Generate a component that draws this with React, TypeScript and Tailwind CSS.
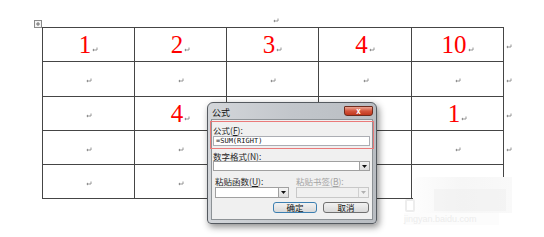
import React from 'react'

const rows: string[][] = [
    ['1', '2', '3', '4', '10'],
    ['', '', '', '', ''],
    ['', '4', '', '', '1'],
    ['', '', '', '', ''],
    ['', '', '', '', ''],
]

function Mark() {
    return (
        <svg className="inline-block w-[6px] h-[5px] ml-[1px] align-[1px]" viewBox="0 0 6 5" fill="none">
            <path d="M5 0.5V3H1" stroke="#8a8a8a" strokeWidth="0.9" />
            <path d="M0.4 3L2 1.6V4.4Z" fill="#8a8a8a" />
        </svg>
    )
}

function DropButton({ disabled }: { disabled?: boolean }) {
    return (
        <div
            className={`w-[10px] h-full flex items-center justify-center border-l ${
                disabled ? 'border-[#d0d0d0]' : 'border-[#a0a0a0] bg-linear-to-b from-[#f4f4f4] to-[#dedede]'
            }`}
        >
            <svg className="w-[5px] h-[3px]" viewBox="0 0 5 3">
                <path d="M0 0H5L2.5 3Z" fill={disabled ? '#b0b0b0' : '#111'} />
            </svg>
        </div>
    )
}

function Label({ text, hot, disabled }: { text: string; hot: string; disabled?: boolean }) {
    return (
        <div className={`h-[9px] leading-[9px] text-[8.5px] whitespace-nowrap ${disabled ? 'text-[#a3a3a3]' : 'text-[#1e1e1e]'}`}>
            {text}(<span className="underline">{hot}</span>):
        </div>
    )
}

function FormulaDialog() {
    return (
        <div className="absolute left-[207px] top-[102px] w-[170px] h-[122px] flex flex-col rounded-t-[6px] rounded-b-[4px] border border-[#555a60] bg-linear-to-r from-[#d3d6da] via-[#c2c6cb] to-[#b9bdc2] shadow-[2px_3px_7px_rgba(0,0,0,0.45)] font-['Noto_Sans_CJK_SC',sans-serif]">
            <div className="h-[16px] pl-[4px] pt-[4px] text-[9px] leading-[11px] text-[#111]">公式</div>
            <div className="absolute right-[3px] top-[3px] w-[29px] h-[10px] rounded-b-[3px] rounded-t-[1px] border border-[#6e2a1c] bg-linear-to-b from-[#e9a493] via-[#d4553c] to-[#c1361c] flex items-center justify-center text-white text-[8px] font-bold leading-none">
                x
            </div>
            <div className="relative mx-[3px] mb-[3px] flex-1 border border-[#8d9296] bg-[#f0f0f0] pl-[1px] pr-[2px] pt-[6px] flex flex-col">
                <div className="absolute left-[-2px] top-[1px] w-[164px] h-[28px] border border-[#ea7a7a]" />
                <Label text="公式" hot="F" />
                <div className="mt-[1px] h-[10px] border border-[#abadb3] bg-white pl-[2px] text-[7px] leading-[8px] text-[#111] font-['DejaVu_Sans_Mono',monospace]">
                    =SUM(RIGHT)
                </div>
                <div className="mt-[6px]">
                    <Label text="数字格式" hot="N" />
                </div>
                <div className="h-[10px] border border-[#a0a0a0] bg-white flex justify-end">
                    <DropButton />
                </div>
                <div className="mt-[6px] flex">
                    <div className="w-[83px] pl-[2px]">
                        <Label text="粘贴函数" hot="U" />
                    </div>
                    <Label text="粘贴书签" hot="B" disabled />
                </div>
                <div className="mt-[1px] flex">
                    <div className="ml-[2px] w-[74px] h-[11px] border border-[#a0a0a0] bg-white flex justify-end">
                        <DropButton />
                    </div>
                    <div className="ml-[7px] w-[73px] h-[11px] border border-[#c8c8c8] bg-[#f0f0f0] flex justify-end">
                        <DropButton disabled />
                    </div>
                </div>
                <div className="mt-[4px] flex justify-end gap-[6px] pr-[1px]">
                    <div className="w-[44px] h-[11px] rounded-[3px] border border-[#3c7fb1] bg-linear-to-b from-[#f2f2f2] to-[#d9d9d9] text-[8.5px] leading-[9px] text-center text-[#111]">
                        确定
                    </div>
                    <div className="w-[46px] h-[11px] rounded-[3px] border border-[#707070] bg-linear-to-b from-[#f2f2f2] to-[#d9d9d9] text-[8.5px] leading-[9px] text-center text-[#111]">
                        取消
                    </div>
                </div>
            </div>
        </div>
    )
}

// faint watermark that sits over the bottom-right corner of the table
function Watermark() {
    return (
        <div className="absolute left-[404px] top-[177px] w-[108px] h-[50px]">
            <div className="absolute left-[9px] top-0 w-[99px] h-[36px] rounded-tl-[6px] bg-linear-to-r from-[#fdfdfd] via-[#f6f6f6] to-[#f9f9f9]" />
            <div className="absolute left-[30px] top-[12px] w-[72px] h-[22px] bg-[#f0f0f0]/60" />
            <div className="absolute left-[1px] top-[22px] w-[10px] h-[13px] rounded-[2px] border-2 border-[#ededed]" />
            <div className="absolute left-0 top-[36px] w-[95px] h-[12px] bg-[#fcfcfc] text-[9px] leading-[12px] text-[#ececec] font-['Liberation_Sans',sans-serif]">
                jingyan.baidu.com
            </div>
        </div>
    )
}

export default function App() {
    return (
        <div className="relative w-[544px] h-[237px] bg-white overflow-hidden">
            <div className="h-[27px] pl-[272px] pt-[10px] leading-none">
                <Mark />
            </div>
            <div className="relative ml-[42px]">
                <svg className="absolute left-[-8px] top-[-7px] w-[8px] h-[8px]" viewBox="0 0 8 8">
                    <rect x="0.5" y="0.5" width="7" height="7" fill="#f4f4f4" stroke="#8a8a8a" />
                    <path d="M4 2V6M2 4H6" stroke="#555" strokeWidth="0.8" />
                </svg>
                <table className="border-collapse">
                    <tbody>
                        {rows.map((row, r) => (
                            <tr key={r}>
                                {row.map((val, c) => (
                                    <td
                                        key={c}
                                        className={`border border-[#454545] p-0 text-center align-top ${c === 3 ? 'w-[93px]' : 'w-[92px]'} ${r === 1 ? 'h-[35px]' : 'h-[34px]'}`}
                                    >
                                        <div className="h-[33px] leading-[33px] whitespace-nowrap">
                                            {val && (
                                                <span className="font-['Liberation_Serif',serif] text-[25px] text-[#ff0000]">{val}</span>
                                            )}
                                            <Mark />
                                        </div>
                                    </td>
                                ))}
                                <td className="p-0 pl-[1px] align-top">
                                    <div className="h-[33px] leading-[33px]">
                                        <Mark />
                                    </div>
                                </td>
                            </tr>
                        ))}
                    </tbody>
                </table>
            </div>
            <FormulaDialog />
            <Watermark />
        </div>
    )
}
